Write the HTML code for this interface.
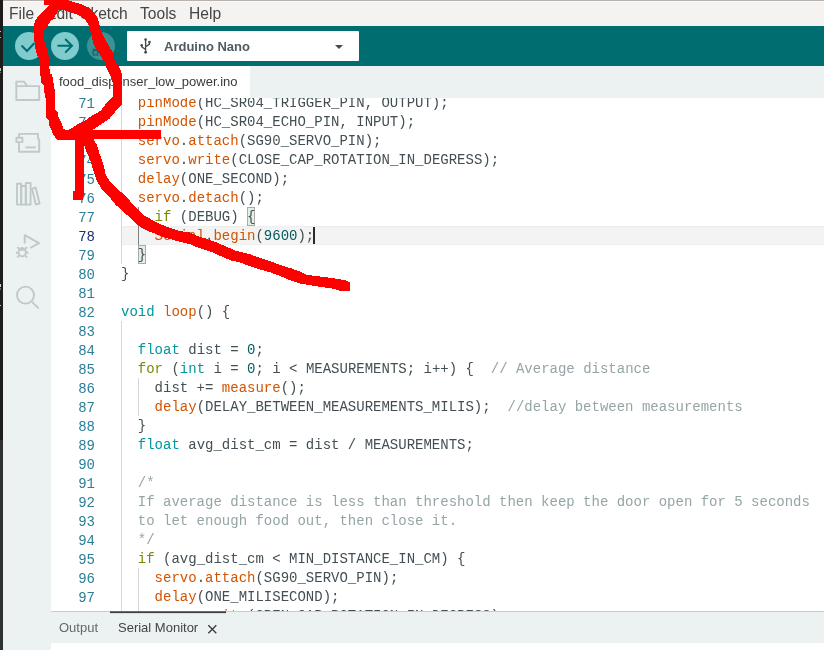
<!DOCTYPE html>
<html><head><meta charset="utf-8">
<style>
*{margin:0;padding:0;box-sizing:border-box}
html,body{width:824px;height:650px;overflow:hidden;background:#fff;position:relative;font-family:"Liberation Sans",sans-serif}
.abs{position:absolute}
#strip{left:0;top:0;width:3px;height:440px;background:#1c1c1c}
#strip2{left:0;top:440px;width:3px;height:210px;background:#2e3234}
#menubar{left:3px;top:0;width:821px;height:26px;background:#f4f3f2;border-top:1px solid #b9b1ab;box-shadow:inset 0 1px 0 #f9f9f8}
.menu{position:absolute;top:4.5px;font-size:15.6px;color:#454545;line-height:18px}
#toolbar{left:3px;top:26px;width:821px;height:40px;background:#006d70}
.btn{position:absolute;top:32px;width:28px;height:28px;border-radius:50%;background:#7fcbcd}
#board{left:127px;top:31px;width:232px;height:30px;background:#fff;border-radius:1px}
#sidebar{left:3px;top:66px;width:48px;height:584px;background:#ecf1f1}
#tabbar{left:51px;top:66px;width:773px;height:32px;background:#ecf1f1}
#tab{left:51px;top:66px;width:199px;height:32px;background:#fff}
#tabtxt{left:59px;top:74px;font-size:13px;color:#3a3a3a;line-height:16px;white-space:pre}
#editor{left:51px;top:98px;width:773px;height:513px;background:#fff;overflow:hidden}
#code{position:absolute;left:0;top:-3px;width:773px}
.ln{position:absolute;left:0;width:44px;text-align:right;font-family:"Liberation Mono",monospace;font-size:14px;line-height:19px;height:19px;color:#2b7f99;white-space:pre}
.cl{position:absolute;left:70px;margin-top:-1px;font-family:"Liberation Mono",monospace;font-size:14px;line-height:19px;height:19px;color:#434f54;white-space:pre}
.cur{color:#1f2f6e}.k{color:#00979d}.c{color:#728e00}.f{color:#d35400}.n{color:#005c5f}.m{color:#95a5a6}
#panel{left:51px;top:611px;width:773px;height:32px;background:#ecf1f1;border-top:1px solid #c9cdcd}
#panelc{left:51px;top:643px;width:773px;height:7px;background:#fff}
.ptab{position:absolute;top:620px;font-size:13px;line-height:16px;color:#444}
</style></head><body><div id="root" style="position:absolute;left:0;top:0;width:824px;height:650px;overflow:hidden;will-change:transform">
<div class="abs" id="strip"></div><div class="abs" id="strip2"></div>
<div class="abs" style="left:0;top:31px;width:1px;height:1px;background:#c8c8c8"></div>
<div class="abs" style="left:0;top:37px;width:1px;height:1px;background:#b0b0b0"></div>
<div class="abs" style="left:0;top:68px;width:1px;height:3px;background:#c0c0c0"></div>
<div class="abs" style="left:0;top:72px;width:1px;height:1px;background:#707070"></div>
<div class="abs" style="left:0;top:284px;width:1px;height:3px;background:#d0d0d0"></div>
<div class="abs" style="left:0;top:288px;width:1px;height:2px;background:#606060"></div>
<div class="abs" style="left:0;top:305px;width:1px;height:1px;background:#c8c8c8"></div>

<div class="abs" id="menubar"></div>
<div class="menu" style="left:9px">File</div>
<div class="menu" style="left:46px">Edit</div>
<div class="menu" style="left:80px">Sketch</div>
<div class="menu" style="left:140px">Tools</div>
<div class="menu" style="left:189px">Help</div>
<div class="abs" id="toolbar"></div>
<div class="btn" style="left:15px"></div>
<div class="btn" style="left:51px"></div>
<div class="btn" style="left:87px;background:#3b9294"></div>
<div class="abs" id="board"></div>
<div class="abs" style="left:164px;top:39px;font-size:13px;font-weight:bold;color:#4e5b61;line-height:16px">Arduino Nano</div>
<div class="abs" id="sidebar"></div>
<div class="abs" id="tabbar"></div>
<div class="abs" id="tab"></div>
<div class="abs" id="tabtxt">food_dispenser_low_power.ino</div>
<div class="abs" id="editor">
<div style="position:absolute;left:70px;top:128px;width:703px;height:19px;background:#f3f3f3;border-top:1px solid #eeeeee;border-bottom:1px solid #eeeeee"></div>
<div style="position:absolute;left:70px;top:0px;width:1px;height:166px;background:#d6d6d6"></div>
<div style="position:absolute;left:87px;top:109px;width:1px;height:38px;background:#7d8385"></div>
<div style="position:absolute;left:70px;top:223px;width:1px;height:300px;background:#d6d6d6"></div>
<div style="position:absolute;left:87px;top:280px;width:1px;height:38px;background:#d6d6d6"></div>
<div style="position:absolute;left:87px;top:470px;width:1px;height:60px;background:#d6d6d6"></div>
<div style="position:absolute;left:196px;top:109px;width:8px;height:19px;background:#e4efe4;border:1px solid #ababab"></div>
<div style="position:absolute;left:87px;top:147px;width:8px;height:19px;background:#e4efe4;border:1px solid #ababab"></div>
<div style="position:absolute;left:262px;top:129px;width:2px;height:17px;background:#2a2a2a"></div>
<div id="code">
<div class="ln" style="top:0px">71</div>
<div class="cl" style="top:0px">  <span class="f">pinMode</span>(HC_SR04_TRIGGER_PIN, OUTPUT);</div>
<div class="ln" style="top:19px">72</div>
<div class="cl" style="top:19px">  <span class="f">pinMode</span>(HC_SR04_ECHO_PIN, INPUT);</div>
<div class="ln" style="top:38px">73</div>
<div class="cl" style="top:38px">  <span class="f">servo</span>.<span class="f">attach</span>(SG90_SERVO_PIN);</div>
<div class="ln" style="top:57px">74</div>
<div class="cl" style="top:57px">  <span class="f">servo</span>.<span class="f">write</span>(CLOSE_CAP_ROTATION_IN_DEGRESS);</div>
<div class="ln" style="top:76px">75</div>
<div class="cl" style="top:76px">  <span class="f">delay</span>(ONE_SECOND);</div>
<div class="ln" style="top:95px">76</div>
<div class="cl" style="top:95px">  <span class="f">servo</span>.<span class="f">detach</span>();</div>
<div class="ln" style="top:114px">77</div>
<div class="cl" style="top:114px">    <span class="c">if</span> (DEBUG) <span class="b">{</span></div>
<div class="ln cur" style="top:133px">78</div>
<div class="cl" style="top:133px">    <span class="f">Serial</span>.<span class="f">begin</span>(<span class="n">9600</span>);</div>
<div class="ln" style="top:152px">79</div>
<div class="cl" style="top:152px">  <span class="b">}</span></div>
<div class="ln" style="top:171px">80</div>
<div class="cl" style="top:171px">}</div>
<div class="ln" style="top:190px">81</div>
<div class="cl" style="top:190px"></div>
<div class="ln" style="top:209px">82</div>
<div class="cl" style="top:209px"><span class="k">void</span> <span class="f">loop</span>() {</div>
<div class="ln" style="top:228px">83</div>
<div class="cl" style="top:228px"></div>
<div class="ln" style="top:247px">84</div>
<div class="cl" style="top:247px">  <span class="k">float</span> dist = <span class="n">0</span>;</div>
<div class="ln" style="top:266px">85</div>
<div class="cl" style="top:266px">  <span class="c">for</span> (<span class="k">int</span> i = <span class="n">0</span>; i &lt; MEASUREMENTS; i++) {  <span class="m">// Average distance</span></div>
<div class="ln" style="top:285px">86</div>
<div class="cl" style="top:285px">    dist += <span class="f">measure</span>();</div>
<div class="ln" style="top:304px">87</div>
<div class="cl" style="top:304px">    <span class="f">delay</span>(DELAY_BETWEEN_MEASUREMENTS_MILIS);  <span class="m">//delay between measurements</span></div>
<div class="ln" style="top:323px">88</div>
<div class="cl" style="top:323px">  }</div>
<div class="ln" style="top:342px">89</div>
<div class="cl" style="top:342px">  <span class="k">float</span> avg_dist_cm = dist / MEASUREMENTS;</div>
<div class="ln" style="top:361px">90</div>
<div class="cl" style="top:361px"></div>
<div class="ln" style="top:380px">91</div>
<div class="cl" style="top:380px">  <span class="m">/*</span></div>
<div class="ln" style="top:399px">92</div>
<div class="cl" style="top:399px">  <span class="m">If average distance is less than threshold then keep the door open for 5 seconds</span></div>
<div class="ln" style="top:418px">93</div>
<div class="cl" style="top:418px">  <span class="m">to let enough food out, then close it.</span></div>
<div class="ln" style="top:437px">94</div>
<div class="cl" style="top:437px">  <span class="m">*/</span></div>
<div class="ln" style="top:456px">95</div>
<div class="cl" style="top:456px">  <span class="c">if</span> (avg_dist_cm &lt; MIN_DISTANCE_IN_CM) {</div>
<div class="ln" style="top:475px">96</div>
<div class="cl" style="top:475px">    <span class="f">servo</span>.<span class="f">attach</span>(SG90_SERVO_PIN);</div>
<div class="ln" style="top:494px">97</div>
<div class="cl" style="top:494px">    <span class="f">delay</span>(ONE_MILISECOND);</div>
<div class="ln" style="top:513px">98</div>
<div class="cl" style="top:513px">    <span class="f">servo</span>.<span class="f">write</span>(OPEN_CAP_ROTATION_IN_DEGRESS);</div>
</div></div>
<div class="abs" id="panel"></div>
<div class="abs" id="panelc"></div>
<div class="ptab" style="left:59px;color:#636a6c">Output</div>
<div class="ptab" style="left:118px">Serial Monitor</div>
<!--ICONS--><svg class="abs" style="left:0;top:0" width="824" height="650" viewBox="0 0 824 650">
<g fill="none" stroke="#006d70" stroke-width="2" stroke-linecap="butt" stroke-linejoin="miter">
<path d="M21.5,45.5 L27,51 L34.5,43"/>
<path d="M57.5,45.8 H72 M65.2,39 L72,45.8 L65.2,52.6"/>
</g>
<g fill="none" stroke="#12676a" stroke-width="1.1">
<ellipse cx="95.5" cy="52.2" rx="2.2" ry="2.8"/>
<path d="M92.6,50.6 H98.4 M91.6,52.6 H93.3 M97.7,52.6 H99.4 M92.6,48.6 L93.8,49.6 M98.4,48.6 L97.2,49.6 M92.6,55.8 L93.8,54.8 M98.4,55.8 L97.2,54.8"/>
</g>
<g fill="none" stroke="#3f4b50" stroke-width="1.3">
<path d="M145.6,40 V52.5 M145.6,49.6 L141.8,46.8 V45.4 M145.6,46.6 L149.4,44.4 V42.2"/>
</g>
<g fill="#3f4b50">
<circle cx="145.6" cy="39.6" r="1.3"/><circle cx="145.6" cy="52.3" r="1.4"/><circle cx="141.7" cy="45.2" r="1.3"/><rect x="148.3" y="40.9" width="2.3" height="2.3"/>
<path d="M335,45 H343 L339,49 Z"/>
</g>
<g fill="none" stroke="#bfc9c9" stroke-width="1.9" stroke-linejoin="round">
<path d="M16.3,100 V81.6 H24 L27.4,86.1 H39.2 V100 Z M16.3,86.1 H27.4"/>
<path d="M19,137 V133.9 H38 V138.4 L39.2,139.8 V151.8 H19 V143"/>
<rect x="16.4" y="137.8" width="6" height="4.3" fill="#ecf1f1"/>
<path d="M25.5,147.4 H35.7"/>
<rect x="17" y="183.8" width="4.2" height="20.8"/>
<rect x="21.2" y="186" width="4.6" height="18.6"/>
<rect x="25.8" y="183" width="4.8" height="21.6"/>
<path d="M32,188.6 L35.7,187.8 L39.6,203.6 L35.8,204.5 Z"/>
<path d="M24.7,243.6 V235.2 L39,243.2 L30.2,248"/>
<ellipse cx="22.2" cy="252.2" rx="3.6" ry="4.2"/>
<path d="M18.6,249.9 H25.8 M16,252.8 H18.6 M25.8,252.8 H28.4 M17.2,247.2 L19,248.6 M27.2,247.2 L25.4,248.6 M17.2,257.4 L19,255.8 M27.2,257.4 L25.4,255.8"/>
<circle cx="25.5" cy="295.1" r="8.5"/>
<path d="M32,301.8 L38.6,308.4"/>
</g>
<g fill="none" stroke="#3a3a3a" stroke-width="1.3">
<path d="M208.3,625.3 L216.3,633.3 M216.3,625.3 L208.3,633.3"/>
</g>
<rect x="110" y="611.3" width="116" height="1.8" fill="#404040"/>
</svg><!--/ICONS-->
</div><!--RED--><svg class="abs" style="left:0;top:0" width="824" height="650" viewBox="0 0 824 650" shape-rendering="crispEdges"><path fill="#ff0000" fill-rule="evenodd" d="M43.8,0 L67.4,0 L71.7,1.5 L80.5,3.9 L88.3,7.3 L93.1,11.7 L98,18.4 L99.7,26.2 L101.6,32.3 L104.6,38.5 L108.9,45.8 L112.6,52 L114.6,59.3 L117.7,65.5 L120.2,68.5 L122,74.7 L122,104.5 L116,110.7 L109.8,118.3 L104.9,121.8 L99.4,125.2 L93.2,129.7 L92.1,130.4 L97,130 L161,129.5 L161,138.5 L104.6,139 L93.8,139.5 L96.9,145 L99.2,152.7 L103.1,163.5 L105.8,175 L110,181.5 L117.7,189.2 L124.6,194.9 L130,201 L133.8,204.9 L139.2,210.3 L144.6,215.7 L150,218.7 L155.4,221.8 L162.3,224.9 L170,228 L179.2,231 L190,232.5 L195,235.3 L205,238.3 L215.8,242.2 L225,246 L234.2,250.11 L240,251.9 L250.9,254.5 L258.2,257.4 L269.1,260.7 L279.3,264.7 L291,268.3 L298.5,271 L307,274.9 L320.6,276.6 L334.2,278.3 L345.6,280.4 L350,282.1 L350,291 L340.1,291 L332.5,288.5 L319.7,286.8 L306.1,284.6 L300,283.6 L291,280.7 L279.3,275.6 L269.1,272 L258.2,269 L248.7,265.8 L240,262.36 L231.2,260.5 L221.9,256.6 L213.5,252.8 L205,249.7 L195,246.6 L190,244.16 L176.2,240.8 L165.4,237.7 L155.4,233.8 L145.4,230 L136.9,224.6 L131.5,219.2 L120.8,209.2 L116.2,205.4 L110,197.7 L101.5,189 L96.5,180.2 L93.1,170 L91.4,163.8 L88.1,155 L85.8,150 L84.2,144.6 L84.2,190 L83,200 L73,200 L73,190.6 L75,190.6 L75,139.5 L57.1,139.5 L54.2,136 L53.2,134.2 L51.1,129.2 L49.2,124.9 L48.6,120 L45.8,117.5 L45.8,99.1 L44.9,96 L44.3,91.2 L43.7,85.7 L40.9,82.6 L40,66 L39.1,58 L37.2,55.7 L35.1,47.7 L34.2,38.5 L34.2,24.3 L35.8,19.4 L40.2,14.1 L46,8.3 L48.9,5.3 L43.8,4.9 Z M58.2,9.5 L64,10.2 L70.8,12.6 L78.5,15 L84.4,18.4 L87.7,23.3 L89.6,26.2 L91.7,37.2 L93.6,44.6 L97.2,50.2 L102.8,59.4 L104.2,61.2 L106,67.3 L108.5,72.2 L110.9,76.5 L112.8,82.7 L112.9,96.8 L110.5,98.9 L104.9,105.2 L100.8,110.7 L95.9,113.5 L91.1,116.2 L85.5,120.4 L80,123.2 L77.5,124 L73.8,126.8 L69.5,129.5 L65.5,130.2 L63.4,128.6 L60.9,121.8 L58.5,116.9 L57.8,112.3 L54.8,109.8 L54.8,96 L54.8,91.2 L53.5,83.2 L52.9,77.7 L51.7,74.3 L49.8,73.4 L48.9,58 L48.3,53.2 L45.8,46.5 L44,39.7 L43.4,33.2 L44,31.1 L48.3,24.6 L51.5,20 L52.8,19.4 L57.2,13.1 Z"/></svg><!--/RED-->
</body></html>
